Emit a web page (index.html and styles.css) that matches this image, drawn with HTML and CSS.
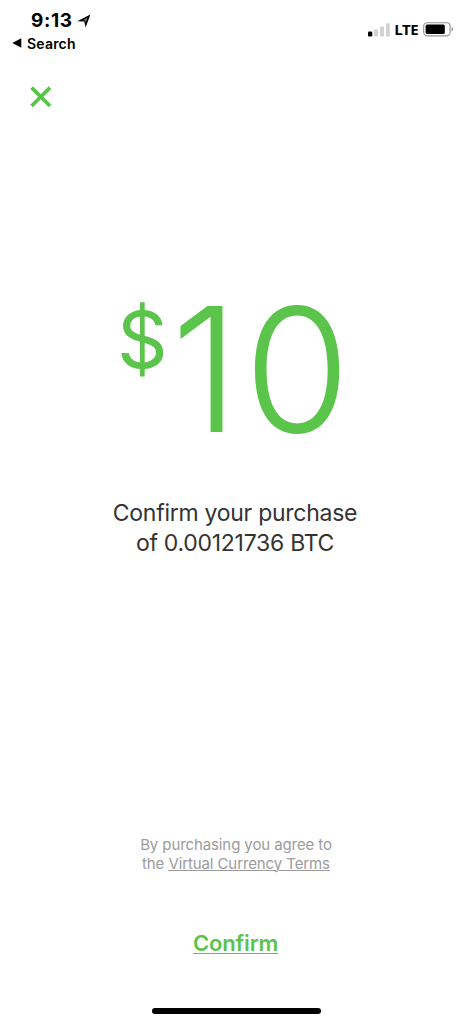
FILE: index.html
```html
<!DOCTYPE html>
<html lang="en">
<head>
<meta charset="utf-8">
<title>Confirm purchase</title>
<link rel="stylesheet" href="styles.css">
</head>
<body>
<div class="screen">
  <header class="status">
    <div class="status-left">
      <div class="clock"><span class="time">9:13</span><svg class="location" width="14" height="14" viewBox="0 0 14 14"><path d="M13.4 .6 8.6 13.4 7.3 7.5 .3 7.2Z"/><path d="M10.6 3.3 8.6 8.4 8.2 6.5 6 6.3Z" fill="#777"/></svg></div>
      <div class="back"><svg width="10" height="10" viewBox="0 0 10 10"><path d="M.3 5 9.3 .2V9.8Z"/></svg><span class="back-label">Search</span></div>
    </div>
    <div class="status-right">
      <svg class="signal" width="22" height="14" viewBox="0 0 22 14"><rect y="8.4" width="4.3" height="5.2" rx="1.3"/><g fill="#d2d2d2"><rect x="6" y="6.2" width="4" height="7.4" rx="1"/><rect x="12" y="3.4" width="4" height="10.2" rx="1"/><rect x="18" y=".2" width="3.7" height="13.4" rx="1"/></g></svg>
      <span class="network">LTE</span>
      <svg class="battery" width="31" height="15" viewBox="0 0 31 15"><rect x=".7" y=".7" width="26.4" height="13.2" rx="3.6" fill="none" stroke="#929292" stroke-width="1.1"/><rect x="2.6" y="2.5" width="19.2" height="9.6" rx="1.6"/><path d="M28.6 5.1q1.6.6 1.6 2.2t-1.6 2.2Z" fill="#929292"/></svg>
    </div>
  </header>
  <button class="close" aria-label="Close"><svg width="22" height="22" viewBox="0 0 22 22"><path d="M1.6 1.6 20 20M20 1.6 1.6 20"/></svg></button>
  <main class="main">
    <div class="amount"><span class="dollar">$</span><span class="one">1</span><span class="zero">0</span></div>
    <div class="message"><div class="line-a">Confirm your purchase</div><div class="line-b">of 0.00121736 BTC</div></div>
  </main>
  <footer class="footer">
    <div class="terms"><div class="terms-a">By purchasing you agree to</div><div class="terms-b">the <a class="link">Virtual Currency Terms</a></div></div>
    <a class="confirm">Confirm</a>
    <div class="home"></div>
  </footer>
</div>
</body>
</html>
```
FILE: styles.css
```css
* { box-sizing: border-box; }
body { margin: 0; background: #fff; }
.screen { width: 472px; height: 1024px; display: flex; flex-direction: column; overflow: hidden; font-family: Inter, "Liberation Sans", sans-serif; color: #000; }
.status { height: 60px; flex: none; display: flex; justify-content: space-between; padding: 8px 18px 0 12px; }
.status-left { display: flex; flex-direction: column; }
.clock { display: flex; align-items: center; height: 25px; padding-left: 19px; gap: 4px; }
.time { font-size: 19px; font-weight: 700; line-height: 23px; letter-spacing: .6px; }
.back { display: flex; align-items: center; height: 20px; gap: 5px; }
.back-label { font-size: 14px; font-weight: 600; letter-spacing: .2px; }
.status-right { display: flex; align-items: center; height: 43px; }
.network { margin: 0 5px 2px 4px; font-family: "Open Sans", sans-serif; font-size: 15px; font-weight: 700; letter-spacing: -.6px; }
.close { width: 22px; height: 22px; flex: none; margin: 26px 0 0 30px; padding: 0; border: 0; background: none; display: flex; }
.close path { fill: none; stroke: #5ac44b; stroke-width: 3.8; }
.main { flex: 1; display: flex; flex-direction: column; }
.amount { display: flex; align-items: flex-start; margin: 194px 0 0 117px; height: 134px; color: #5ac44b; }
.dollar { width: 54px; font-size: 79px; line-height: 75px; font-weight: 380; }
.one { width: 73px; font-size: 173px; line-height: 134px; font-weight: 345; }
.zero { font-size: 172px; line-height: 134px; font-weight: 335; letter-spacing: -1px; }
.message { margin: 62px 2px 0 0; font-size: 23px; line-height: 30px; letter-spacing: -.27px; color: #333; text-align: center; }
.footer { flex: none; height: 188px; display: flex; flex-direction: column; align-items: center; }
.terms { font-size: 15px; line-height: 18.5px; letter-spacing: -.1px; color: #9b9b9b; text-align: center; }
.link, .confirm { text-decoration: underline; text-underline-offset: 2px; text-decoration-thickness: 1px; }
.link { text-underline-offset: 1px; }
.confirm { margin: 56px 1px 0 0; font-size: 22px; line-height: 28px; font-weight: 600; letter-spacing: -.15px; color: #5ac44b; text-underline-offset: 2px; }
.home { width: 169px; height: 6px; margin-top: 51px; border-radius: 3px; background: #000; }
```
